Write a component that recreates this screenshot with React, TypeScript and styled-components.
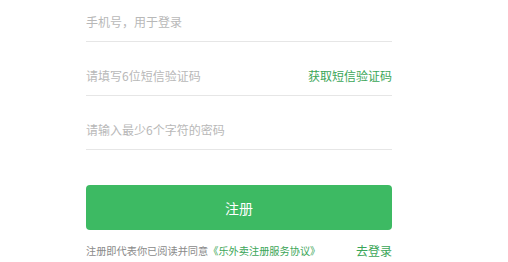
import React from 'react';
import styled, { createGlobalStyle } from 'styled-components';

const GlobalStyle = createGlobalStyle`
  html, body {
    margin: 0;
    padding: 0;
    background: #ffffff;
    overflow: hidden;
  }
  body {
    font-family: "Noto Sans CJK SC", "Noto Sans", sans-serif;
  }
`;

const Page = styled.div`
  width: 508px;
  height: 262px;
  overflow: hidden;
  background: #ffffff;
`;

const Form = styled.form`
  width: 306px;
  margin: -12px 0 0 86px;
  display: flex;
  flex-direction: column;
`;

const Field = styled.div`
  box-sizing: border-box;
  height: 54px;
  padding-top: 13px;
  display: flex;
  align-items: center;
  border-bottom: 1px solid #e6e6e6;
`;

const Input = styled.input`
  flex: 1;
  min-width: 0;
  height: 40px;
  padding: 0;
  border: none;
  outline: none;
  background: transparent;
  font-family: inherit;
  font-size: 12px;
  color: #333333;

  &::placeholder {
    color: #b8b8b8;
  }
`;

const CodeLink = styled.a`
  font-size: 12px;
  color: #3ba658;
  text-decoration: none;
  white-space: nowrap;
  cursor: pointer;
`;

const Submit = styled.button`
  margin-top: 35px;
  height: 45px;
  border: none;
  border-radius: 4px;
  background: #3dba63;
  color: #ffffff;
  font-family: inherit;
  font-size: 14px;
  cursor: pointer;

  &:focus {
    outline: 0;
  }
`;

const Footer = styled.div`
  margin-top: 10px;
  height: 20px;
  display: flex;
  align-items: center;
  justify-content: space-between;
`;

const Agreement = styled.span`
  font-size: 10.2px;
  color: #8a8a8a;
`;

const GreenLink = styled.a<{ $size?: number }>`
  font-size: ${(p) => p.$size ?? 10.2}px;
  color: #3ba658;
  text-decoration: none;
  cursor: pointer;
`;

export default function App() {
  return (
    <Page>
      <GlobalStyle />
      <Form onSubmit={(e) => e.preventDefault()}>
        <Field>
          <Input placeholder="手机号，用于登录" />
        </Field>
        <Field>
          <Input placeholder="请填写6位短信验证码" />
          <CodeLink>获取短信验证码</CodeLink>
        </Field>
        <Field>
          <Input type="password" placeholder="请输入最少6个字符的密码" />
        </Field>
        <Submit type="submit">注册</Submit>
        <Footer>
          <Agreement>
            注册即代表你已阅读并同意
            <GreenLink>《乐外卖注册服务协议》</GreenLink>
          </Agreement>
          <GreenLink $size={12}>去登录</GreenLink>
        </Footer>
      </Form>
    </Page>
  );
}
